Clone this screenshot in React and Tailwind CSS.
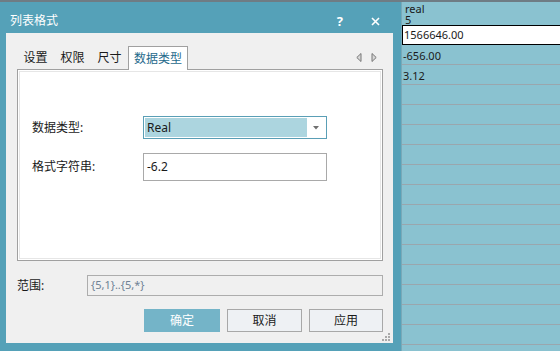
import React from "react";

const FONT = { fontFamily: '"Noto Sans", "Noto Sans CJK SC", sans-serif' };

const tabs = ["设置", "权限", "尺寸"];

const Sheet = () => {
  const rows = ["-656.00", "3.12"];
  const empty = Array.from({ length: 14 });
  return (
    <div className="flex-1 flex flex-col border-l border-[#78a9b8] bg-[#8ac2d0] text-[#1a1a1a] text-[11px] overflow-hidden">
      {/* Header */}
      <div className="h-[23px] shrink-0 pl-[3px] pt-[1px] text-[11px] flex flex-col">
        <div className="h-[11px] leading-[11px]">real</div>
        <div className="h-[11px] leading-[11px]">5</div>
      </div>
      {/* Edited cell */}
      <div className="h-[20px] shrink-0 bg-white border border-black flex items-center pl-[1px] text-[11px] mr-[-2px]">
        1566646.00
      </div>
      {rows.map((r) => (
        <div key={r} className="h-[20px] shrink-0 border-b border-[#9aa6ad] flex items-center pt-[3px] pl-[1px]">
          {r}
        </div>
      ))}
      {empty.map((_, i) => (
        <div key={i} className="h-[20px] shrink-0 border-b border-[#9aa6ad]" />
      ))}
    </div>
  );
};

const App = () => {
  return (
    <div className="w-[560px] h-[351px] overflow-hidden flex flex-col bg-[#8ac2d0]" style={FONT}>
      {/* Top strip */}
      <div className="h-[2px] shrink-0 bg-[#6f7c84]" />

      <div className="flex flex-1 min-h-0">
        {/* Dialog */}
        <div className="w-[401px] flex flex-col bg-[#55a1b8]">
          {/* Title bar */}
          <div className="h-[31px] shrink-0 flex items-start pt-[12px] pl-[10px] text-white text-[12px] leading-[14px]">
            <span>列表格式</span>
            <span className="ml-auto font-bold text-[13px] leading-[14px] mr-[28px]">?</span>
            <svg width="9" height="9" viewBox="0 0 9 9" className="mt-[3px] mr-[21px]">
              <path d="M1 1 L8 8 M8 1 L1 8" stroke="white" strokeWidth="1.6" />
            </svg>
          </div>

          {/* Body */}
          <div className="flex-1 ml-[6px] mr-[8px] mb-[8px] bg-[#f0f0f0] relative flex flex-col pl-[11px] pr-[10px] text-[12px] text-[#1a1a1a]">
            {/* Tabs */}
            <div className="mt-[13px] h-[23px] flex items-end">
              {tabs.map((t) => (
                <div key={t} className="w-[37px] h-[23px] flex items-center justify-center">
                  {t}
                </div>
              ))}
              <div className="w-[60px] h-[24px] -mb-px relative z-10 bg-white border border-b-0 border-[#a0a0a0] flex items-center justify-center text-[#1f6a8c]">
                数据类型
              </div>
              <div className="ml-auto flex items-center gap-[9px] h-[23px] pr-[6px]">
                <svg width="6" height="9" viewBox="0 0 6 9">
                  <path d="M5 0.5 L0.8 4.5 L5 8.5 Z" fill="#d8d8d8" stroke="#777" strokeWidth="1" />
                </svg>
                <svg width="6" height="9" viewBox="0 0 6 9">
                  <path d="M1 0.5 L5.2 4.5 L1 8.5 Z" fill="#d8d8d8" stroke="#777" strokeWidth="1" />
                </svg>
              </div>
            </div>

            {/* Panel */}
            <div className="h-[192px] bg-white border border-[#a0a0a0] shadow-[inset_0_0_0_1px_#ffffff,inset_0_0_0_2px_#e6e6e6] pl-[14px] pt-[46px]">
              <div className="flex items-center h-[23px]">
                <div className="w-[111px]">数据类型:</div>
                <div className="w-[184px] h-[23px] border border-[#5a9fb6] bg-white flex p-[1px]">
                  <div className="flex-1 bg-[#acd5df] flex items-center pl-[2px]">Real</div>
                  <div className="w-[18px] flex items-center justify-center">
                    <svg width="6" height="4" viewBox="0 0 6 4">
                      <path d="M0 0 L6 0 L3 3.5 Z" fill="#707070" />
                    </svg>
                  </div>
                </div>
              </div>
              <div className="flex items-center h-[28px] mt-[14px]">
                <div className="w-[111px]">格式字符串:</div>
                <div className="w-[184px] h-[28px] border border-[#a9a9a9] bg-white flex items-center pl-[3px]">
                  -6.2
                </div>
              </div>
            </div>

            {/* Range */}
            <div className="mt-[14px] h-[21px] flex items-center">
              <div className="w-[70px]">范围:</div>
              <div className="flex-1 h-[21px] border border-[#adadad] bg-[#f0f0f0] flex items-center px-[3px] text-[11px] text-[#6f8295]">
                {"{5,1}..{5,*}"}
              </div>
            </div>

            {/* Buttons */}
            <div className="mt-[13px] flex justify-end gap-[7px]">
              <button className="w-[76px] h-[23px] bg-[#74b4c8] text-white">确定</button>
              <button className="w-[75px] h-[23px] bg-[#eef1f4] border border-[#a8a8a8]">取消</button>
              <button className="w-[74px] h-[23px] bg-[#eef1f4] border border-[#a8a8a8]">应用</button>
            </div>

            {/* Resize grip */}
            <svg width="8" height="8" viewBox="0 0 8 8" className="absolute right-[3px] bottom-[2px]">
              <rect x="6" y="0" width="2" height="2" fill="#a9a9a9" />
              <rect x="3" y="3" width="2" height="2" fill="#a9a9a9" />
              <rect x="6" y="3" width="2" height="2" fill="#a9a9a9" />
              <rect x="0" y="6" width="2" height="2" fill="#a9a9a9" />
              <rect x="3" y="6" width="2" height="2" fill="#a9a9a9" />
              <rect x="6" y="6" width="2" height="2" fill="#a9a9a9" />
            </svg>
          </div>
        </div>

        <Sheet />
      </div>
    </div>
  );
};

export default App;
